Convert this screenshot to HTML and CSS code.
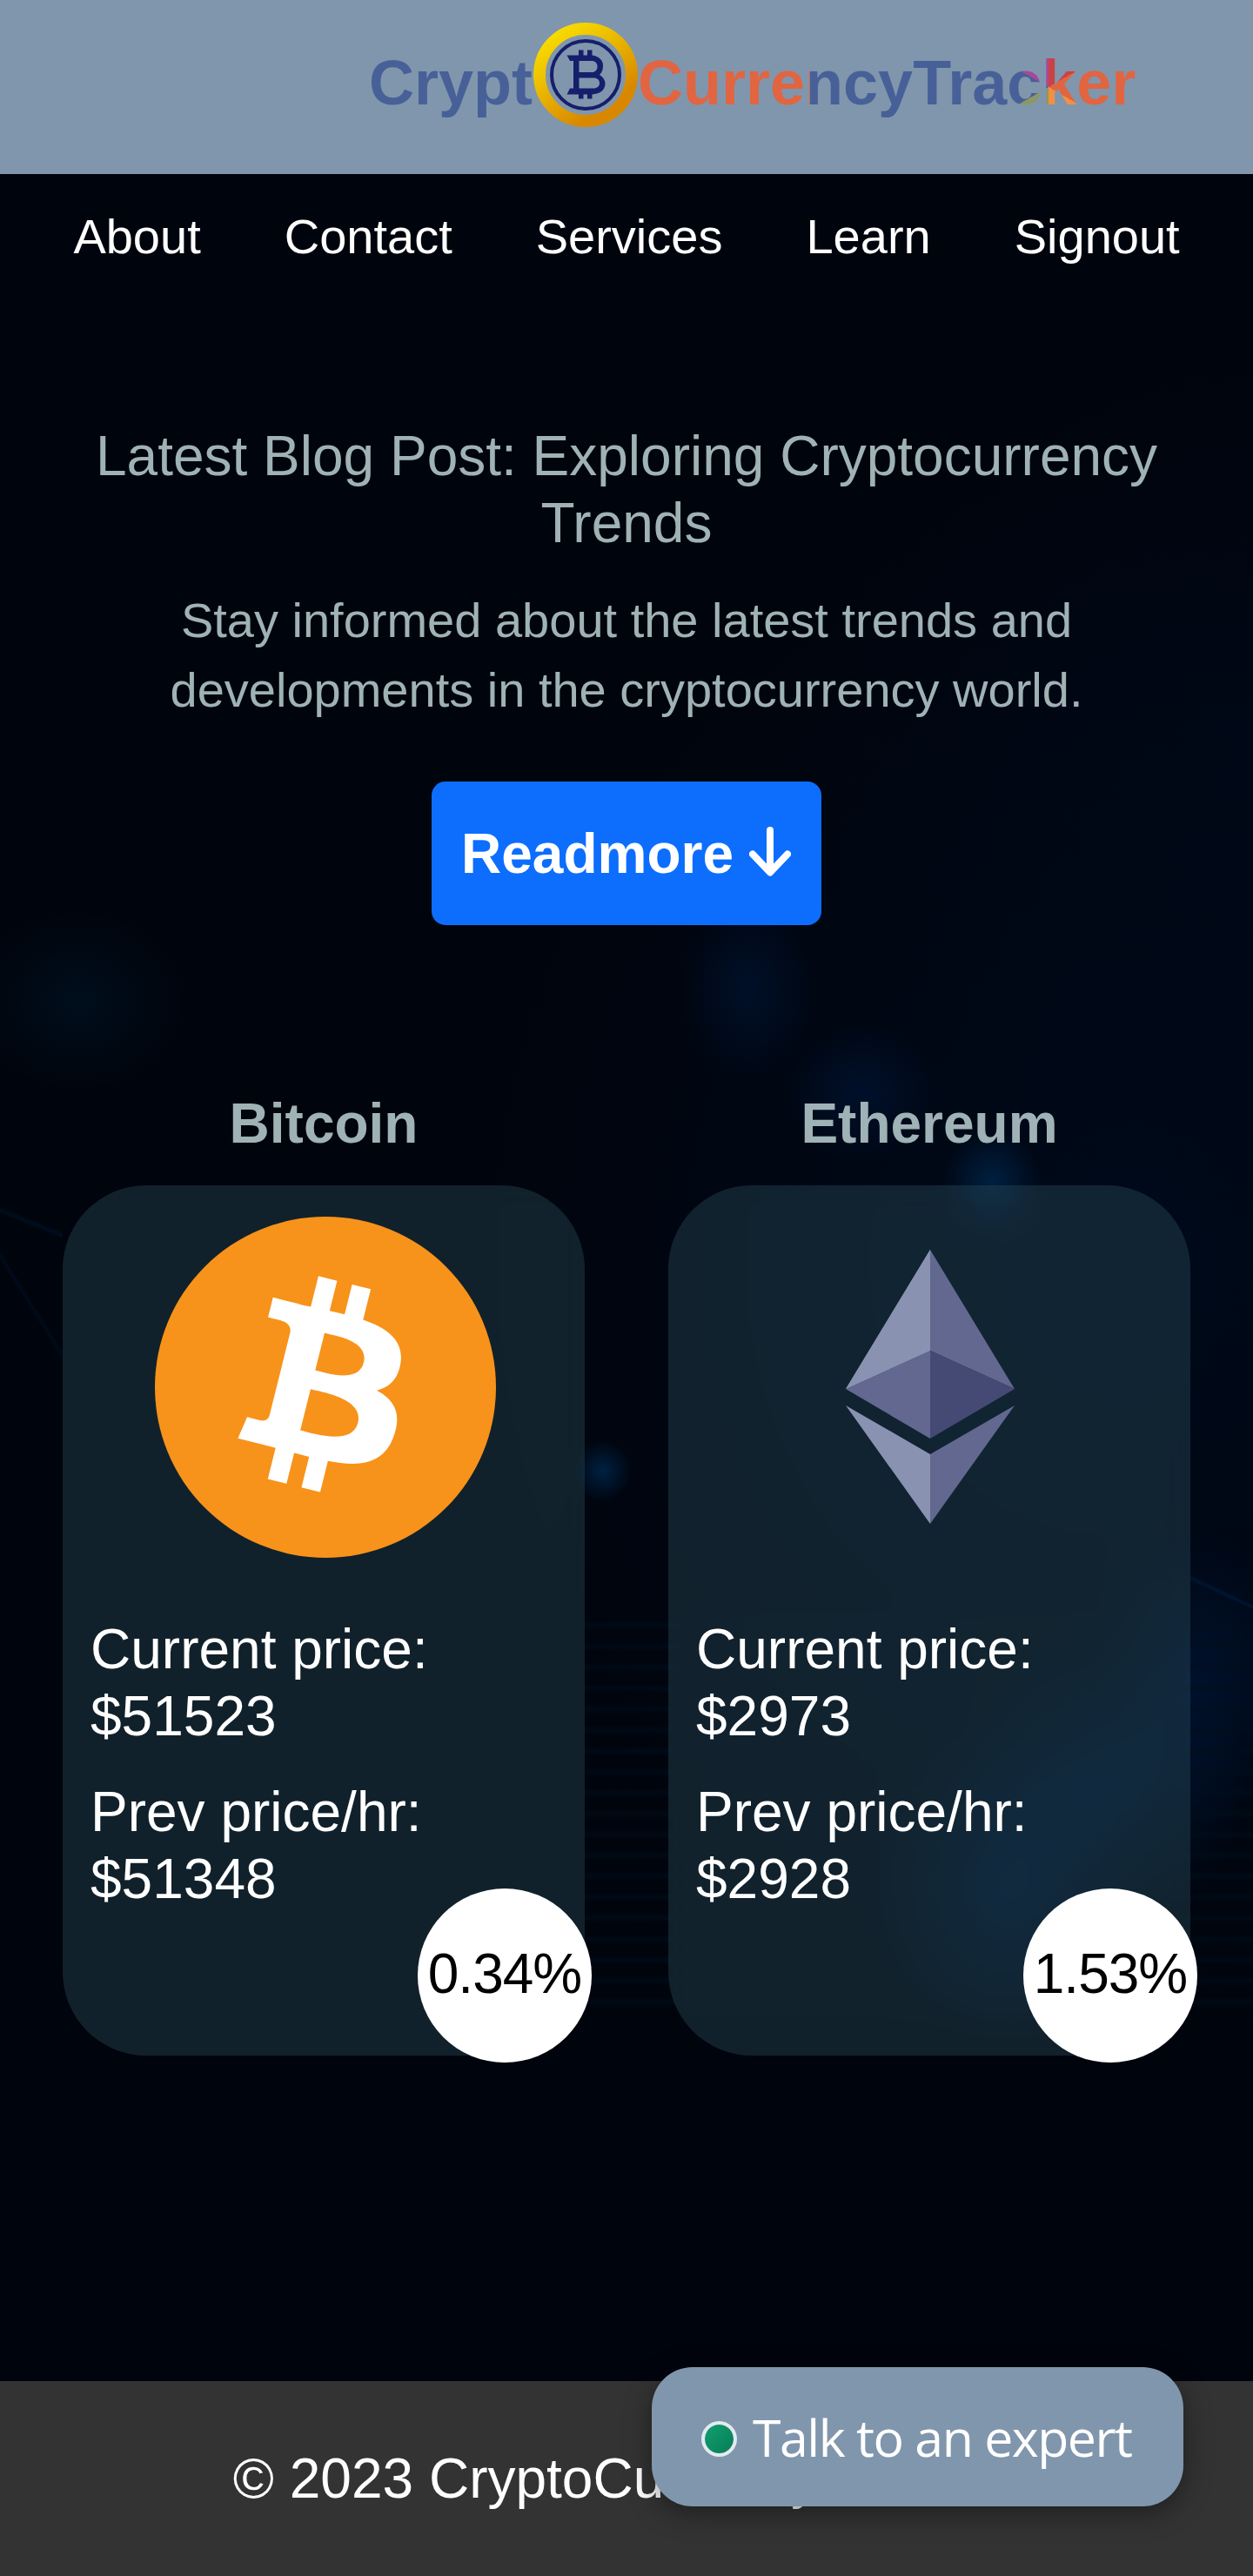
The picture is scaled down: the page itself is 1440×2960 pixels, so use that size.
FILE: index.html
```html
<!DOCTYPE html>
<html lang="en">
<head>
<meta charset="utf-8">
<title>CryptoCurrencyTracker</title>
<link rel="stylesheet" href="styles.css">
</head>
<body>
<header class="header">
  <h1 class="brand"><span>Crypt</span><svg class="coin" viewBox="0 0 120 120" aria-hidden="true">
    <defs><linearGradient id="gold" x1=".1" y1="0" x2=".8" y2="1"><stop offset="0" stop-color="#fbe000"/><stop offset=".3" stop-color="#eec400"/><stop offset=".85" stop-color="#d88800"/></linearGradient></defs>
    <circle cx="60" cy="60" r="53" fill="none" stroke="url(#gold)" stroke-width="14"/>
    <circle cx="60" cy="60" r="39" fill="none" stroke="#151f6b" stroke-width="4"/>
    <path fill="#151f6b" fill-rule="evenodd" d="M38.500 37.500H52V31.500H57.500V37.500H62V31.500H67.500V37.500C75 38.500 80 43 80 49C80 54 79 57 76 60C80 62.500 82.500 66 82.500 70C82.500 77 77 82 67.500 82.500V87.500H62V82.500H57.500V87.500H52V82.500H38.500L42 75.500H46V44H42ZM52.500 44V57H67C71 57 73.500 54.500 73.500 50.500C73.500 46.500 71 44 67 44ZM52.500 63.500V75.500H69C73.500 75.500 76 73 76 69.500C76 66 73.500 63.500 69 63.500Z"/>
  </svg><span>CurrencyTracker</span></h1>
</header>
<nav class="nav">
  <a>About</a><a>Contact</a><a>Services</a><a>Learn</a><a>Signout</a>
</nav>
<main>
  <section class="blog">
    <h2>Latest Blog Post: Exploring Cryptocurrency Trends</h2>
    <p>Stay informed about the latest trends and developments in the cryptocurrency world.</p>
    <a class="readmore">Readmore <svg class="arrow" viewBox="0 0 48 57" aria-hidden="true"><path d="M24 4V51M4 31.500L24 52.500L44 31.500"/></svg></a>
  </section>
  <section class="coins">
    <article>
      <h3>Bitcoin</h3>
      <div class="card">
        <div class="logo"><svg class="btc" viewBox="0 0 64 64" aria-hidden="true"><circle cx="32" cy="32" r="32" fill="#f7931a"/><path fill="#fff" d="M46.110 27.441c.636-4.258-2.606-6.547-7.039-8.074l1.438-5.768-3.512-.875-1.400 5.616c-.922-.230-1.870-.447-2.812-.662l1.410-5.653-3.509-.875-1.439 5.766c-.764-.174-1.514-.346-2.242-.527l.004-.018-4.842-1.209-.934 3.750s2.605.597 2.550.634c1.422.355 1.680 1.296 1.636 2.042l-1.638 6.571c.098.025.225.061.365.117l-.371-.092-2.297 9.205c-.174.432-.615 1.080-1.609.834.035.051-2.552-.637-2.552-.637l-1.743 4.020 4.570 1.139c.850.213 1.683.436 2.502.646l-1.453 5.835 3.507.875 1.440-5.772c.957.260 1.887.500 2.797.726l-1.434 5.745 3.511.875 1.453-5.823c5.987 1.133 10.490.676 12.383-4.738 1.527-4.360-.075-6.875-3.225-8.516 2.294-.531 4.022-2.040 4.483-5.157zM38.087 38.690c-1.086 4.360-8.426 2.004-10.807 1.412l1.928-7.729c2.380.594 10.011 1.770 8.880 6.317zm1.085-11.312c-.990 3.966-7.100 1.951-9.083 1.457l1.748-7.010c1.983.494 8.367 1.416 7.335 5.553z"/></svg></div>
        <p>Current price: $51523</p>
        <p>Prev price/hr: $51348</p>
        <span class="change">0.34%</span>
      </div>
    </article>
    <article>
      <h3>Ethereum</h3>
      <div class="card">
        <div class="logo"><svg class="eth" viewBox="0 0 194 315" aria-hidden="true">
          <path fill="#8a92b2" d="M97 0L0 160L97 116ZM0 179L97 235V315Z"/>
          <path fill="#62688f" d="M97 0L194 160L97 116L0 160L97 217ZM194 179L97 235V315Z"/>
          <path fill="#8a92b2" d="M97 0L0 160L97 116Z"/>
          <path fill="#454a75" d="M97 116L194 160L97 217Z"/>
        </svg></div>
        <p>Current price: $2973</p>
        <p>Prev price/hr: $2928</p>
        <span class="change">1.53%</span>
      </div>
    </article>
  </section>
</main>
<footer class="footer">© 2023 CryptoCurrency Tracker</footer>
<div class="chat"><i class="online"></i><span>Talk to an expert</span></div>
</body>
</html>
```
FILE: styles.css
```css
* { box-sizing: border-box; }

body {
  margin: 0;
  min-height: 2960px;
  display: flex;
  flex-direction: column;
  font-family: "Liberation Sans", Arial, sans-serif;
  color: #fff;
  background:
    radial-gradient(ellipse 34px 36px at 692px 1690px, rgba(0, 42, 84, .75), transparent),
    radial-gradient(ellipse 56px 60px at 1140px 1358px, rgba(0, 44, 86, .65), transparent),
    radial-gradient(ellipse 80px 110px at 860px 1135px, rgba(0, 22, 56, .6), transparent),
    radial-gradient(ellipse 90px 80px at 990px 1255px, rgba(0, 22, 58, .6), transparent),
    radial-gradient(ellipse 130px 110px at 90px 1150px, rgba(0, 20, 38, .6), transparent),
    linear-gradient(25deg, transparent 46%, rgba(0, 26, 62, .7) 50%, transparent 54%) 1368px 1800px / 72px 60px no-repeat,
    linear-gradient(22deg, transparent 44%, rgba(0, 20, 44, .6) 50%, transparent 56%) 0 1380px / 72px 50px no-repeat,
    linear-gradient(58deg, transparent 47%, rgba(0, 16, 38, .6) 50%, transparent 53%) 0 1440px / 72px 120px no-repeat,
    repeating-linear-gradient(transparent 0 12px, rgba(0, 14, 28, .6) 18px, transparent 24px) 672px 1850px / 768px 470px no-repeat,
    radial-gradient(ellipse 150px 180px at 1160px 2170px, rgba(0, 28, 66, .65), transparent),
    radial-gradient(ellipse 170px 160px at 1270px 2050px, rgba(0, 26, 62, .65), transparent),
    radial-gradient(ellipse 120px 170px at 1375px 1930px, rgba(0, 24, 62, .6), transparent),
    radial-gradient(ellipse 800px 900px at 1300px 1450px, rgba(0, 12, 32, .7), transparent),
    radial-gradient(ellipse 500px 500px at 1440px 850px, rgba(0, 8, 26, .5), transparent),
    #00040c;
}

h1, h2, h3, p { margin: 0; }

.header {
  height: 200px;
  padding-left: 383px;
  background: #8096ad;
}

.brand {
  display: flex;
  align-items: flex-start;
  width: 966px;
  height: 200px;
  padding: 25.500px 0 0 41px;
  font-size: 72px;
  line-height: 139px;
  color: transparent;
  background: conic-gradient(#ca4246 16.666%, #e16541 16.666% 33.333%, #f18f43 33.333% 50%, #8b9862 50% 66.666%, #476098 66.666% 83.333%, #a7489b 83.333%) 0 0 / 548px 200px;
  -webkit-background-clip: text;
  background-clip: text;
}

.coin { flex: none; width: 120px; height: 120px; margin-left: 1px; }

.nav {
  display: flex;
  justify-content: center;
  gap: 96px;
  padding-top: 30px;
  font-size: 56px;
  line-height: 84px;
}

.blog {
  display: flex;
  flex-direction: column;
  align-items: center;
  padding: 172px 96px 0;
  text-align: center;
  color: #9fb2b6;
}

.blog h2 {
  font-size: 64px;
  font-weight: 400;
  line-height: 76.800px;
}

.blog p {
  margin: 33px 0 64px;
  padding: 0 64px;
  font-size: 56px;
  line-height: 80.700px;
}

.readmore {
  display: flex;
  align-items: center;
  width: 448px;
  height: 165px;
  padding-left: 34px;
  border-radius: 16px;
  background: #0d6efd;
  color: #fff;
  font-size: 64px;
  font-weight: 700;
  white-space: pre;
}

.arrow {
  width: 48px;
  height: 57px;
  margin-top: -5px;
  fill: none;
  stroke: #fff;
  stroke-width: 8;
  stroke-linecap: round;
  stroke-linejoin: round;
}

.coins {
  display: grid;
  grid-template-columns: 600px 600px;
  gap: 96px;
  padding: 190px 72px 0;
}

.coins h3 {
  margin-bottom: 32px;
  font-size: 64px;
  line-height: 76.800px;
  text-align: center;
  color: #9fb2b6;
}

.card {
  position: relative;
  height: 1000px;
  padding: 0 32px;
  border-radius: 96px;
  background: rgba(47, 86, 100, .36);
  -webkit-backdrop-filter: blur(16px);
  backdrop-filter: blur(16px);
}

.logo {
  display: flex;
  justify-content: center;
  align-items: center;
  height: 464px;
  margin-bottom: 31px;
}

.btc { width: 392px; height: 392px; margin-left: 4px; }
.eth { width: 194px; height: 315px; margin-left: 1px; }

.card p {
  max-width: 440px;
  margin-bottom: 33px;
  font-size: 64px;
  line-height: 77px;
}

.change {
  position: absolute;
  right: -8px;
  bottom: -8px;
  width: 200px;
  height: 200px;
  border-radius: 50%;
  background: #fff;
  color: #000;
  font-size: 64px;
  letter-spacing: -1px;
  line-height: 197px;
  text-align: center;
}

.footer {
  height: 224px;
  margin-top: auto;
  padding: 64px 0;
  background: #333;
  font-size: 64px;
  line-height: 96px;
  text-align: center;
}

.chat {
  position: absolute;
  left: 749px;
  top: 2720px;
  display: flex;
  align-items: center;
  width: 611px;
  height: 160px;
  padding: 0 57px;
  gap: 18px;
  border-radius: 47px;
  background: #8096ad;
  box-shadow: 0 8px 32px rgba(0, 0, 0, .4);
  color: #fff;
  font: 59px/80px "Open Sans", "Noto Sans", sans-serif;
  letter-spacing: -1.500px;
  white-space: nowrap;
}

.online {
  flex: none;
  width: 41px;
  height: 41px;
  margin-top: 5px;
  border: 4px solid #e2ebef;
  border-radius: 50%;
  background: linear-gradient(135deg, #10a070, #087c56) padding-box;
}
```
